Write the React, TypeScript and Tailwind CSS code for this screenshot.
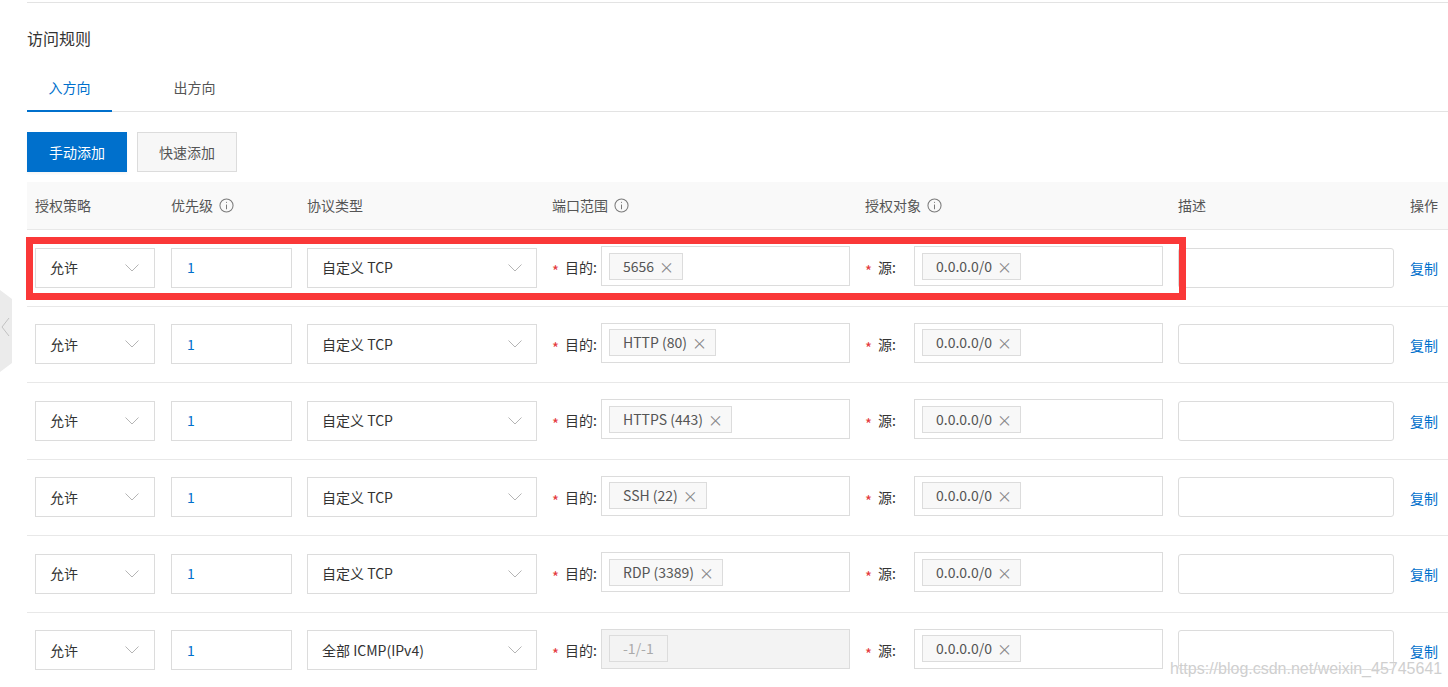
import React from 'react';

interface Rule {
  protocol: string;
  port: string;
  disabled?: boolean;
}

const rules: Rule[] = [
  { protocol: '自定义 TCP', port: '5656' },
  { protocol: '自定义 TCP', port: 'HTTP (80)' },
  { protocol: '自定义 TCP', port: 'HTTPS (443)' },
  { protocol: '自定义 TCP', port: 'SSH (22)' },
  { protocol: '自定义 TCP', port: 'RDP (3389)' },
  { protocol: '全部 ICMP(IPv4)', port: '-1/-1', disabled: true },
];

const InfoIcon = () => (
  <svg className="w-[15px] h-[15px] ml-[6px]" viewBox="0 0 16 16" fill="none" stroke="#7a7a7a" strokeWidth="1.1">
    <circle cx="8" cy="8" r="7" />
    <line x1="8" y1="7" x2="8" y2="12" />
    <circle cx="8" cy="4.6" r="0.6" fill="#7a7a7a" stroke="none" />
  </svg>
);

const Chevron = () => (
  <svg className="w-[14px] h-[8px]" viewBox="0 0 14 8" fill="none" stroke="#b5b5b5" strokeWidth="1">
    <polyline points="0.5,0.5 7,7 13.5,0.5" />
  </svg>
);

const Tag = ({ label, disabled }: { label: string; disabled?: boolean }) => (
  <div
    className={`h-[27px] flex items-center border border-[#dcdcdc] pl-[13px] ${
      disabled ? 'bg-[#f3f3f3] text-[#aaa] pr-[13px]' : 'bg-[#f8f8f8] text-[#555] pr-[8px]'
    }`}
  >
    <span>{label}</span>
    {!disabled && <span className="ml-[5px] text-[#888] text-[15px] leading-none">×</span>}
  </div>
);

const Required = ({ label }: { label: string }) => (
  <div className="w-[49px] flex items-center shrink-0 text-[#333]">
    <span className="relative top-[3px] text-[#e4393c] text-[15px] mr-[6px] leading-none">*</span>
    <span>{label}</span>
  </div>
);

const Row = ({ rule }: { rule: Rule }) => (
  <div className="flex items-center h-[76.5px] border-b border-[#e8e8e8]">
    <div className="w-[136px] pl-[8px]">
      <div className="w-[120px] h-[40px] border border-[#dcdcdc] flex items-center justify-between pl-[14px] pr-[15px] text-[#333]">
        <span>允许</span>
        <Chevron />
      </div>
    </div>
    <div className="w-[136px] pl-[8px]">
      <div className="w-[121px] h-[40px] border border-[#dcdcdc] flex items-center pl-[15px] text-[#0070cc]">1</div>
    </div>
    <div className="w-[245px] pl-[8px]">
      <div className="w-[230px] h-[40px] border border-[#dcdcdc] flex items-center justify-between pl-[14px] pr-[14px] text-[#333]">
        <span>{rule.protocol}</span>
        <Chevron />
      </div>
    </div>
    <div className="w-[313px] pl-[8px] flex items-center">
      <Required label="目的:" />
      <div
        className={`w-[249px] h-[40px] -mt-[3px] border border-[#dcdcdc] flex items-center pl-[7px] ${
          rule.disabled ? 'bg-[#f3f3f3]' : 'bg-white'
        }`}
      >
        <Tag label={rule.port} disabled={rule.disabled} />
      </div>
    </div>
    <div className="w-[313px] pl-[8px] flex items-center">
      <Required label="源:" />
      <div className="w-[249px] h-[40px] -mt-[3px] border border-[#dcdcdc] flex items-center pl-[7px]">
        <Tag label="0.0.0.0/0" />
      </div>
    </div>
    <div className="w-[232px] pl-[8px]">
      <div className="w-[216px] h-[40px] border border-[#dcdcdc] rounded-[3px]" />
    </div>
    <div className="pl-[8px] pt-[2px] text-[#0070cc]">复制</div>
  </div>
);

export default function App() {
  return (
    <div className="relative w-[1448px] h-[687px] overflow-hidden bg-white text-[14px] font-['Noto_Sans_CJK_SC','Noto_Sans',sans-serif]">
      <div className="pl-[27px]">
        <div className="mt-[2px] border-t border-[#e3e3e3]" />

        <div className="mt-[23px] h-[24px] leading-[24px] text-[16px] text-[#333]">访问规则</div>

        {/* tabs */}
        <div className="mt-[14px] flex h-[48px] border-b border-[#e3e3e3]">
          <div className="w-[85px] flex items-center justify-center border-b-2 border-[#0070cc] text-[#0070cc] -mb-[1px] pt-[1px]">入方向</div>
          <div className="ml-[40px] w-[85px] flex items-center justify-center text-[#555]">出方向</div>
        </div>

        <div className="mt-[20px] flex gap-[10px]">
          <button className="w-[100px] h-[40px] bg-[#0070cc] text-white shadow-[0_2px_2px_rgba(0,0,0,0.04)]">手动添加</button>
          <button className="w-[100px] h-[40px] bg-[#f7f7f7] border border-[#dcdcdc] text-[#555]">快速添加</button>
        </div>

        {/* table header */}
        <div className="mt-[10px] flex items-center h-[48px] bg-[#f9f9f9] border-b border-[#e8e8e8] text-[#555]">
          <div className="w-[136px] pl-[8px]">授权策略</div>
          <div className="w-[136px] pl-[8px] flex items-center">优先级<InfoIcon /></div>
          <div className="w-[245px] pl-[8px]">协议类型</div>
          <div className="w-[313px] pl-[8px] flex items-center">端口范围<InfoIcon /></div>
          <div className="w-[313px] pl-[8px] flex items-center">授权对象<InfoIcon /></div>
          <div className="w-[232px] pl-[8px]">描述</div>
          <div className="pl-[8px]">操作</div>
        </div>

        {rules.map((r, i) => (
          <Row key={i} rule={r} />
        ))}
      </div>

      {/* annotation box */}
      <div className="absolute left-[26px] top-[237px] w-[1160px] h-[63px] border-[7px] border-[#fa3838]" />

      {/* side handle */}
      <svg className="absolute left-0 top-[290px]" width="13" height="82" viewBox="0 0 13 82">
        <polygon points="0,0 12,9 12,73 0,82" fill="#ebebeb" />
        <polyline points="9,28 2,37 9,46" fill="none" stroke="#c2c2c2" strokeWidth="1" />
      </svg>

      {/* watermark */}
      <div className="absolute left-[1170px] top-[657px] text-[16px] text-[#cfcfcf] font-['Liberation_Sans',sans-serif] [text-shadow:0_0_1px_#fff]">
        https://blog.csdn.net/weixin_45745641
      </div>
    </div>
  );
}
